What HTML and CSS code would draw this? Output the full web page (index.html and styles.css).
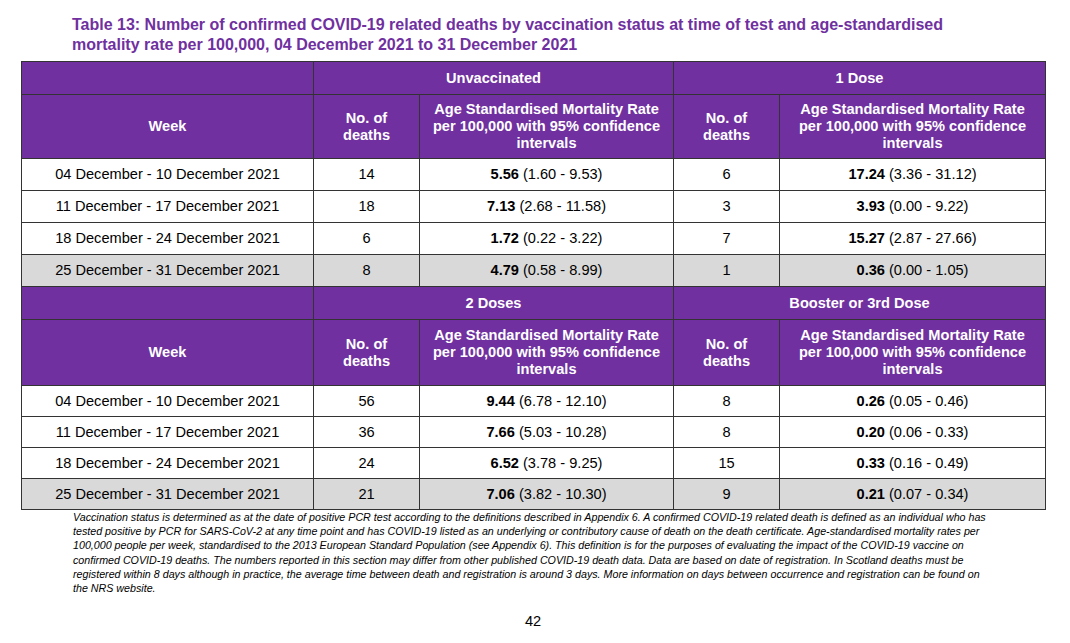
FILE: index.html
```html
<!DOCTYPE html>
<html lang="en">
<head>
<meta charset="utf-8">
<title>Table 13</title>
<link rel="stylesheet" href="styles.css">
</head>
<body>
<div class="page">
  <h1 class="title">Table 13: Number of confirmed COVID-19 related deaths by vaccination status at time of test and age-standardised<br>mortality rate per 100,000, 04 December 2021 to 31 December 2021</h1>
  <table class="data">
    <colgroup>
      <col class="c-week">
      <col class="c-n">
      <col class="c-rate">
      <col class="c-n">
      <col class="c-rate2">
    </colgroup>
    <tbody>
      <tr class="group">
        <th></th>
        <th colspan="2">Unvaccinated</th>
        <th colspan="2">1 Dose</th>
      </tr>
      <tr class="sub">
        <th>Week</th>
        <th>No. of<br>deaths</th>
        <th>Age Standardised Mortality Rate<br>per 100,000 with 95% confidence<br>intervals</th>
        <th>No. of<br>deaths</th>
        <th>Age Standardised Mortality Rate<br>per 100,000 with 95% confidence<br>intervals</th>
      </tr>
      <tr class="row">
        <td>04 December - 10 December 2021</td><td>14</td><td><b>5.56</b> (1.60 - 9.53)</td><td>6</td><td><b>17.24</b> (3.36 - 31.12)</td>
      </tr>
      <tr class="row">
        <td>11 December - 17 December 2021</td><td>18</td><td><b>7.13</b> (2.68 - 11.58)</td><td>3</td><td><b>3.93</b> (0.00 - 9.22)</td>
      </tr>
      <tr class="row">
        <td>18 December - 24 December 2021</td><td>6</td><td><b>1.72</b> (0.22 - 3.22)</td><td>7</td><td><b>15.27</b> (2.87 - 27.66)</td>
      </tr>
      <tr class="row shaded">
        <td>25 December - 31 December 2021</td><td>8</td><td><b>4.79</b> (0.58 - 8.99)</td><td>1</td><td><b>0.36</b> (0.00 - 1.05)</td>
      </tr>
      <tr class="group">
        <th></th>
        <th colspan="2">2 Doses</th>
        <th colspan="2">Booster or 3rd Dose</th>
      </tr>
      <tr class="sub sub2">
        <th>Week</th>
        <th>No. of<br>deaths</th>
        <th>Age Standardised Mortality Rate<br>per 100,000 with 95% confidence<br>intervals</th>
        <th>No. of<br>deaths</th>
        <th>Age Standardised Mortality Rate<br>per 100,000 with 95% confidence<br>intervals</th>
      </tr>
      <tr class="row row2">
        <td>04 December - 10 December 2021</td><td>56</td><td><b>9.44</b> (6.78 - 12.10)</td><td>8</td><td><b>0.26</b> (0.05 - 0.46)</td>
      </tr>
      <tr class="row row2">
        <td>11 December - 17 December 2021</td><td>36</td><td><b>7.66</b> (5.03 - 10.28)</td><td>8</td><td><b>0.20</b> (0.06 - 0.33)</td>
      </tr>
      <tr class="row row2">
        <td>18 December - 24 December 2021</td><td>24</td><td><b>6.52</b> (3.78 - 9.25)</td><td>15</td><td><b>0.33</b> (0.16 - 0.49)</td>
      </tr>
      <tr class="row row2 shaded">
        <td>25 December - 31 December 2021</td><td>21</td><td><b>7.06</b> (3.82 - 10.30)</td><td>9</td><td><b>0.21</b> (0.07 - 0.34)</td>
      </tr>
    </tbody>
  </table>
  <p class="note">Vaccination status is determined as at the date of positive PCR test according to the definitions described in Appendix 6. A confirmed COVID-19 related death is defined as an individual who has<br>tested positive by PCR for SARS-CoV-2 at any time point and has COVID-19 listed as an underlying or contributory cause of death on the death certificate. Age-standardised mortality rates per<br>100,000 people per week, standardised to the 2013 European Standard Population (see Appendix 6). This definition is for the purposes of evaluating the impact of the COVID-19 vaccine on<br>confirmed COVID-19 deaths. The numbers reported in this section may differ from other published COVID-19 death data. Data are based on date of registration. In Scotland deaths must be<br>registered within 8 days although in practice, the average time between death and registration is around 3 days. More information on days between occurrence and registration can be found on<br>the NRS website.</p>
  <div class="pagenum">42</div>
</div>
</body>
</html>
```

FILE: styles.css
```css
html, body {
  margin: 0;
  padding: 0;
  background: #ffffff;
}

.page {
  width: 1070px;
  padding: 15px 0 0 21px;
  box-sizing: border-box;
  font-family: "Liberation Sans", Arial, sans-serif;
  color: #000;
}

.title {
  margin: 0 0 6px 51px;
  font-size: 16px;
  line-height: 20px;
  font-weight: bold;
  color: #7030a0;
}

.data {
  width: 1024px;
  border-collapse: collapse;
  table-layout: fixed;
  font-size: 14.6px;
}

.c-week { width: 292px; }
.c-n { width: 106px; }
.c-rate { width: 254px; }
.c-rate2 { width: 266px; }

.data th,
.data td {
  border: 1.5px solid #333333;
  padding: 0;
  text-align: center;
  vertical-align: middle;
}

.data th {
  background: #7030a0;
  color: #ffffff;
  font-weight: bold;
  line-height: 17px;
}

.group th { height: 32px; }
.sub th { height: 63px; }
.sub2 th { height: 65px; }

.row td {
  height: 31px;
  line-height: 17px;
  background: #ffffff;
}

.row2 td { height: 30px; }

.row.shaded td { background: #d9d9d9; }

.note {
  margin: 0 0 0 52px;
  font-size: 10.7px;
  line-height: 14.2px;
  font-style: italic;
  white-space: nowrap;
}

.pagenum {
  margin: 18px 0 0 504px;
  font-size: 14.6px;
  line-height: 17px;
}
```
